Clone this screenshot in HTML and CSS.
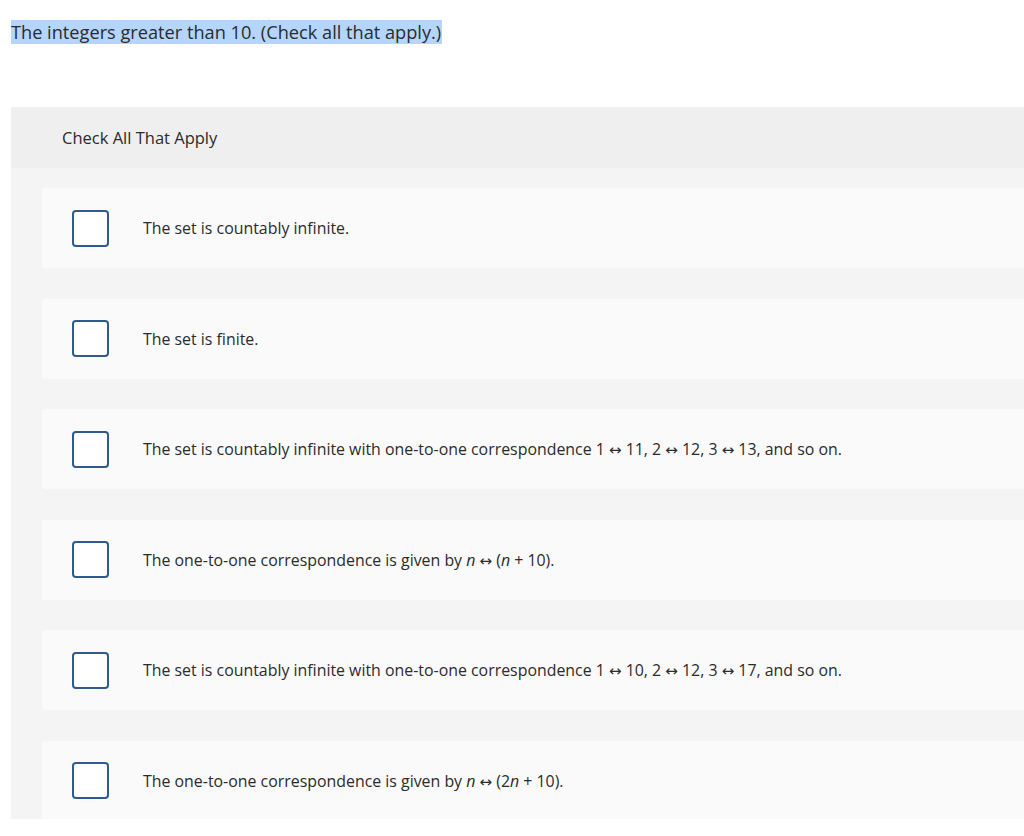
FILE: index.html
```html
<!DOCTYPE html>
<html>
<head>
<meta charset="utf-8">
<link rel="stylesheet" href="styles.css">
</head>
<body>
<div class="page">
  <p class="prompt"><span class="sel">The integers greater than 10. (Check all that apply.)</span></p>
  <div class="panel">
    <div class="panel-head">Check All That Apply</div>
    <div class="panel-body">
      <div class="item"><span class="box"></span><span class="label">The set is countably infinite.</span></div>
      <div class="item"><span class="box"></span><span class="label">The set is finite.</span></div>
      <div class="item"><span class="box"></span><span class="label">The set is countably infinite with one-to-one correspondence 1 <span class="ar">↔</span> 11, 2 <span class="ar">↔</span> 12, 3 <span class="ar">↔</span> 13, and so on.</span></div>
      <div class="item"><span class="box"></span><span class="label">The one-to-one correspondence is given by <i>n</i> <span class="ar">↔</span> (<i>n</i> + 10).</span></div>
      <div class="item"><span class="box"></span><span class="label">The set is countably infinite with one-to-one correspondence 1 <span class="ar">↔</span> 10, 2 <span class="ar">↔</span> 12, 3 <span class="ar">↔</span> 17, and so on.</span></div>
      <div class="item"><span class="box"></span><span class="label">The one-to-one correspondence is given by <i>n</i> <span class="ar">↔</span> (2<i>n</i> + 10).</span></div>
    </div>
  </div>
</div>
</body>
</html>
```
FILE: styles.css
```css
html, body {
  margin: 0;
  padding: 0;
  background: #ffffff;
  overflow: hidden;
}
body {
  font-family: "Open Sans", Lato, sans-serif;
  color: #2b2b2b;
  width: 1024px;
  height: 836px;
}
.page {
  padding: 0 0 0 11px;
}
.prompt {
  margin: 0;
  padding-top: 20px;
  height: 107px;
  box-sizing: border-box;
  font-size: 18.2px;
  line-height: 24px;
}
.sel {
  background: #b4d5fe;
  padding: 0 1px 0 0;
}
.panel {
  width: 1040px;
  height: 712px;
  overflow: hidden;
  background: #f4f4f4;
}
.panel-head {
  height: 61px;
  background: #efefef;
  padding-left: 51px;
  display: flex;
  align-items: center;
  font-size: 16.5px;
  color: #2b2b2b;
}
.panel-body {
  padding: 20px 0 0 31px;
  display: flex;
  flex-direction: column;
  gap: 30.6px;
}
.item {
  height: 80px;
  flex: none;
  background: #fafafa;
  border-radius: 3px;
  display: flex;
  align-items: center;
  padding-left: 30px;
}
.box {
  width: 33px;
  height: 33px;
  border: 2px solid #2e5a8e;
  border-radius: 4px;
  background: #fff;
  flex: none;
}
.label {
  margin-left: 34px;
  font-size: 15.9px;
  color: #2b2b2b;
}
.ar {
  font-family: "DejaVu Sans", sans-serif;
  font-size: 15px;
  line-height: 1;
}
i {
  font-style: italic;
}
```
